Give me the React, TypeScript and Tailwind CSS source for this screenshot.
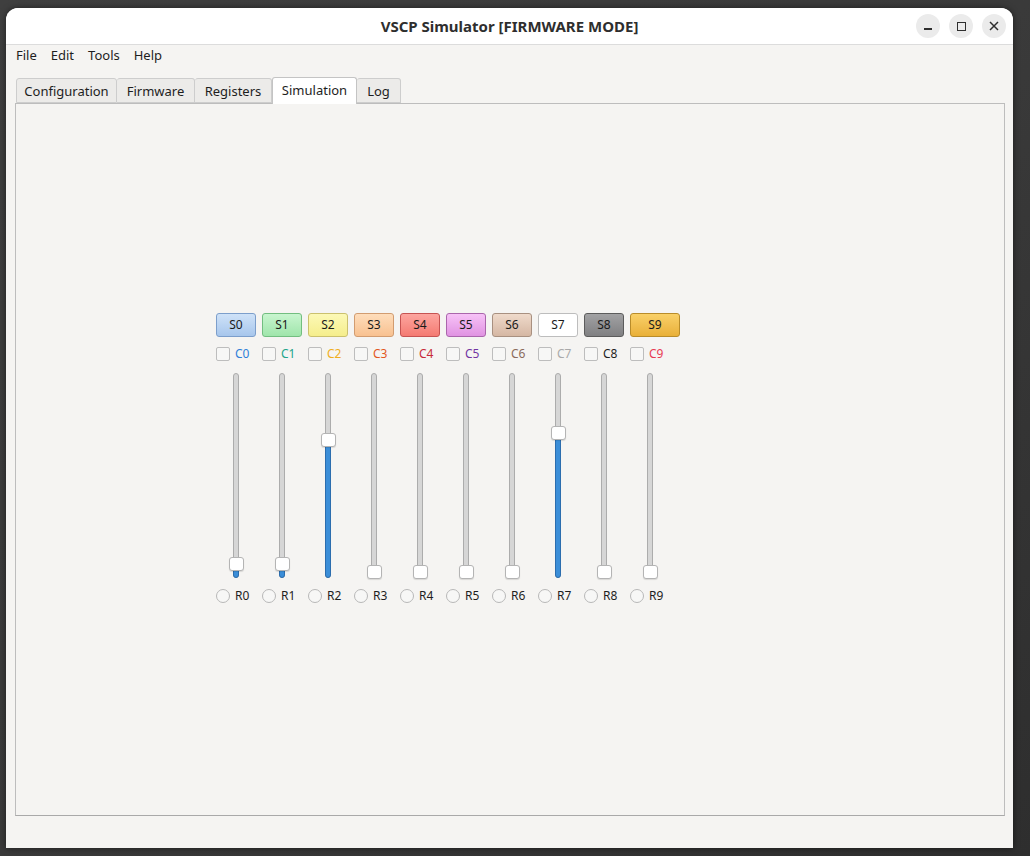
import React from "react";

type Channel = {
  btn: string;
  label: string;
  color: string;
  value: number;
};

// slider values in percent, button styles per channel
const channels: Channel[] = [
  { btn: "w-[40px] bg-gradient-to-b from-[#cfe2f8] to-[#a7c6ec] border-[#7c9ecb]", label: "C0", color: "text-[#2f7fd9]", value: 4 },
  { btn: "w-[40px] bg-gradient-to-b from-[#c8f5cf] to-[#9fe5ab] border-[#72be80]", label: "C1", color: "text-[#22a58a]", value: 4 },
  { btn: "w-[40px] bg-gradient-to-b from-[#fcf9b6] to-[#f5ee8c] border-[#cbc16e]", label: "C2", color: "text-[#f0ae1e]", value: 69 },
  { btn: "w-[40px] bg-gradient-to-b from-[#feddbb] to-[#f8c190] border-[#d29c70]", label: "C3", color: "text-[#e2571f]", value: 0 },
  { btn: "w-[40px] bg-gradient-to-b from-[#fca59f] to-[#f47a72] border-[#c65352]", label: "C4", color: "text-[#c72a3a]", value: 0 },
  { btn: "w-[40px] bg-gradient-to-b from-[#f7c2f7] to-[#e093e2] border-[#aa66ac]", label: "C5", color: "text-[#7234a2]", value: 0 },
  { btn: "w-[40px] bg-gradient-to-b from-[#efdacb] to-[#d5b7a3] border-[#a89080]", label: "C6", color: "text-[#8b6b5b]", value: 0 },
  { btn: "w-[40px] bg-white border-[#bdbdbd]", label: "C7", color: "text-[#a9a9a9]", value: 73 },
  { btn: "w-[40px] bg-gradient-to-b from-[#a2a2a4] to-[#808082] border-[#5c5c5c]", label: "C8", color: "text-[#1e1e1e]", value: 0 },
  { btn: "w-[50px] bg-gradient-to-b from-[#f9d068] to-[#e9b038] border-[#b98c2a]", label: "C9", color: "text-[#e83a52]", value: 0 },
];

const tabs = [
  { name: "Configuration", w: "w-[101px]" },
  { name: "Firmware", w: "w-[78px]" },
  { name: "Registers", w: "w-[77px]" },
  { name: "Simulation", w: "w-[85px]" },
  { name: "Log", w: "w-[44px]" },
];

function Slider({ value }: { value: number }) {
  // track 205px tall, handle centre travels from 198 (min) to 7 (max)
  const centre = 198 - Math.round((value * 191) / 100);
  const fill = 205 - centre;
  return (
    <div className="relative w-[6px] h-[205px] rounded-full bg-[#d6d6d6] border border-[#acacac]">
      {value > 0 && (
        <div
          className="absolute left-[-1px] bottom-[-1px] w-[6px] rounded-full bg-[#3b8ed8] border border-[#2b6dae]"
          style={{ height: fill }}
        />
      )}
      <div
        className="absolute left-[-5px] w-[15px] h-[14px] rounded-[3px] bg-white border border-[#b4b4b4] shadow-[0_1px_1px_rgba(0,0,0,0.12)]"
        style={{ top: centre - 7 }}
      />
    </div>
  );
}

function Column({ ch, i }: { ch: Channel; i: number }) {
  return (
    <div className="flex flex-col items-start w-[40px]">
      <div
        className={`h-[24px] shrink-0 rounded-[3px] border flex items-center justify-center text-[12px] text-[#1a1a1a] ${ch.btn}`}
      >
        S{i}
      </div>
      <div className="flex items-center w-[40px] mt-[10px] h-[14px]">
        <div className="w-[14px] h-[14px] rounded-[2px] border border-[#bdbdbd] bg-[#f7f7f6]" />
        <span className={`ml-[5px] text-[12px] ${ch.color}`}>{ch.label}</span>
      </div>
      <div className="mt-[12px] pl-[17px]">
        <Slider value={ch.value} />
      </div>
      <div className="flex items-center w-[40px] mt-[11px] h-[14px]">
        <div className="w-[14px] h-[14px] rounded-full border border-[#b8b8b8] bg-[#f7f7f6]" />
        <span className="ml-[5px] text-[12px] text-[#1e1e1e]">R{i}</span>
      </div>
    </div>
  );
}

export default function App() {
  return (
    <div
      className="w-[1030px] h-[856px] overflow-hidden bg-gradient-to-br from-[#3f3f3f] via-[#3a3a3a] to-[#2e2e2e] pl-[6px] pt-[8px]"
      style={{ fontFamily: '"Noto Sans", "Open Sans", sans-serif' }}
    >
      <div className="w-[1007px] h-[840px] flex flex-col bg-[#f5f4f2] rounded-t-[12px] shadow-[0_0_6px_rgba(0,0,0,0.5)]">
        {/* Title bar */}
        <div className="relative h-[37px] shrink-0 flex items-center justify-center bg-white rounded-t-[12px] border-b border-[#dcdcdc]">
          <span className="text-[15px] font-bold text-[#2e2e2e]">VSCP Simulator [FIRMWARE MODE]</span>
          <div className="absolute right-[7px] top-[6px] flex gap-[9px]">
            <div className="w-[24px] h-[24px] rounded-full bg-[#ebebeb] flex items-center justify-center">
              <div className="w-[8px] h-[1.5px] bg-[#2e2e2e] mt-[6px]" />
            </div>
            <div className="w-[24px] h-[24px] rounded-full bg-[#ebebeb] flex items-center justify-center">
              <div className="w-[9px] h-[9px] border-[1.5px] border-[#2e2e2e]" />
            </div>
            <div className="w-[24px] h-[24px] rounded-full bg-[#ebebeb] flex items-center justify-center">
              <svg width="10" height="10" viewBox="0 0 10 10">
                <path d="M1 1L9 9M9 1L1 9" stroke="#2e2e2e" strokeWidth="1.5" />
              </svg>
            </div>
          </div>
        </div>

        {/* Menu bar */}
        <div className="h-[21px] shrink-0 flex items-center gap-[14px] pl-[10px] text-[13px] text-[#1e1e1e]">
          <span>File</span>
          <span>Edit</span>
          <span>Tools</span>
          <span>Help</span>
        </div>

        {/* Tabs */}
        <div className="mt-[11px] flex items-end pl-[10px] h-[26px] shrink-0">
          {tabs.map((t) =>
            t.name === "Simulation" ? (
              <div
                key={t.name}
                className={`${t.w} h-[27px] -mb-px relative z-10 flex items-center justify-center rounded-t-[3px] border border-b-0 border-[#c4c4c4] bg-white text-[13px] text-[#1e1e1e]`}
              >
                {t.name}
              </div>
            ) : (
              <div
                key={t.name}
                className={`${t.w} h-[25px] flex items-center justify-center rounded-t-[3px] border border-l-0 first:border-l border-[#cdcdcd] bg-[#ecebe9] text-[13px] text-[#1e1e1e] pt-[2px]`}
              >
                {t.name}
              </div>
            )
          )}
        </div>

        {/* Panel */}
        <div className="ml-[9px] mr-[8px] h-[713px] shrink-0 border border-[#bdbdbd] border-b-[#a9a9a9] bg-[#f5f4f2] flex items-center pl-[200px] pb-[4px]">
          <div className="flex gap-[6px]">
            {channels.map((ch, i) => (
              <Column key={ch.label} ch={ch} i={i} />
            ))}
          </div>
        </div>
      </div>
    </div>
  );
}
